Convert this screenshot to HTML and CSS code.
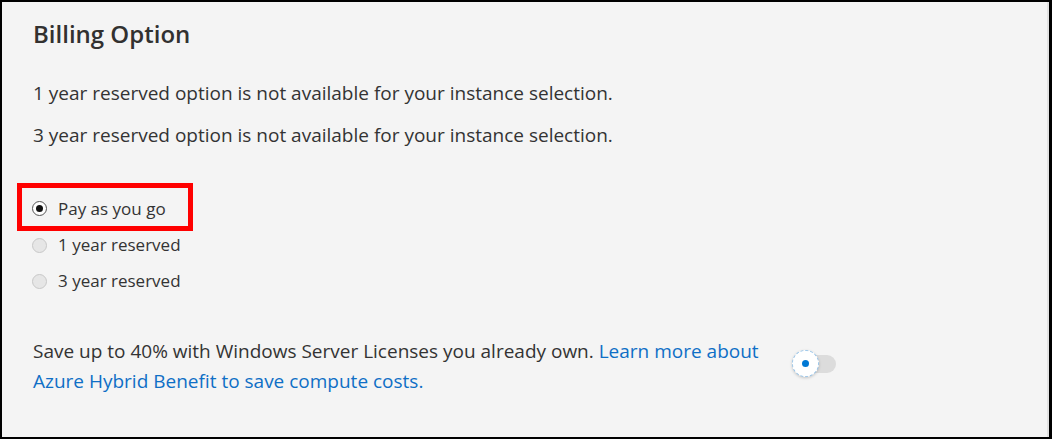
FILE: index.html
```html
<!DOCTYPE html>
<html>
<head>
<meta charset="utf-8">
<link rel="stylesheet" href="styles.css">
</head>
<body>
<div class="frame">
  <div class="panel">
    <h2 class="title">Billing Option</h2>
    <p class="note">1 year reserved option is not available for your instance selection.</p>
    <p class="note">3 year reserved option is not available for your instance selection.</p>
    <div class="options">
      <div class="highlight">
        <label class="option"><span class="radio checked"></span>Pay as you go</label>
      </div>
      <label class="option"><span class="radio disabled"></span>1 year reserved</label>
      <label class="option"><span class="radio disabled"></span>3 year reserved</label>
    </div>
    <div class="hybrid">
      <p class="hybrid-text">Save up to 40% with Windows Server Licenses you already own. <a class="link" href="#">Learn more about Azure Hybrid Benefit to save compute costs.</a></p>
      <div class="toggle"><span class="knob"><span class="dot"></span></span></div>
    </div>
  </div>
</div>
</body>
</html>
```
FILE: styles.css
```css
html, body { margin: 0; padding: 0; }
body { width: 1052px; height: 439px; overflow: hidden; font-family: "Open Sans", "Noto Sans", sans-serif; }
.frame {
  box-sizing: border-box;
  width: 1052px; height: 439px;
  border: 2px solid #000;
  border-right-width: 3px;
  background: #f4f4f4;
}
.panel {
  box-sizing: border-box;
  height: 100%;
  border-right: 2px solid #e2e2e2;
  padding: 16px 0 0 31px;
  color: #333;
}
.title { margin: 0; font-size: 24px; font-weight: 600; line-height: 32px; color: #323130; }
.note { margin: 0; font-size: 19px; line-height: 26px; }
.title + .note { margin-top: 30px; }
.note + .note { margin-top: 16px; }
.options { margin-top: 35px; margin-left: -16px; display: flex; flex-direction: column; }
.highlight { width: 176px; height: 48px; box-sizing: border-box; border: 5px solid #f00; display: flex; align-items: center; padding: 3px 0 0 10px; }
.option { display: flex; align-items: center; font-size: 17px; line-height: 24px; color: #333; }
.options > .option { padding-left: 15px; height: 28px; }
.options > .option + .option { margin-top: 8px; }
.radio { width: 15px; height: 15px; box-sizing: border-box; border-radius: 50%; margin-right: 11px; flex: none; }
.radio.checked { border: 1px solid #555; background: #fff; position: relative; }
.radio.checked::after { content: ""; position: absolute; left: 3px; top: 3px; width: 7px; height: 7px; border-radius: 50%; background: #111; }
.radio.disabled { border: 1px solid #c8c8c8; background: #e6e6e6; }
.hybrid { margin-top: 41px; display: flex; align-items: center; }
.hybrid-text { margin: 0; width: 740px; font-size: 19px; line-height: 30px; color: #333; }
.link { color: #0f6fc6; text-decoration: none; }
.toggle { margin: 0 0 4px 23px; width: 40px; height: 18px; border-radius: 9px; background: #dcdcdc; position: relative; }
.knob { position: absolute; left: -4px; top: -5px; width: 27px; height: 27px; box-sizing: border-box; border-radius: 50%; background: #fff; border: 1px dashed #9cc8ec; box-shadow: 0 1px 3px rgba(0,0,0,0.2); display: flex; align-items: center; justify-content: center; }
.dot { width: 7px; height: 7px; border-radius: 50%; background: #0078d4; }
```
